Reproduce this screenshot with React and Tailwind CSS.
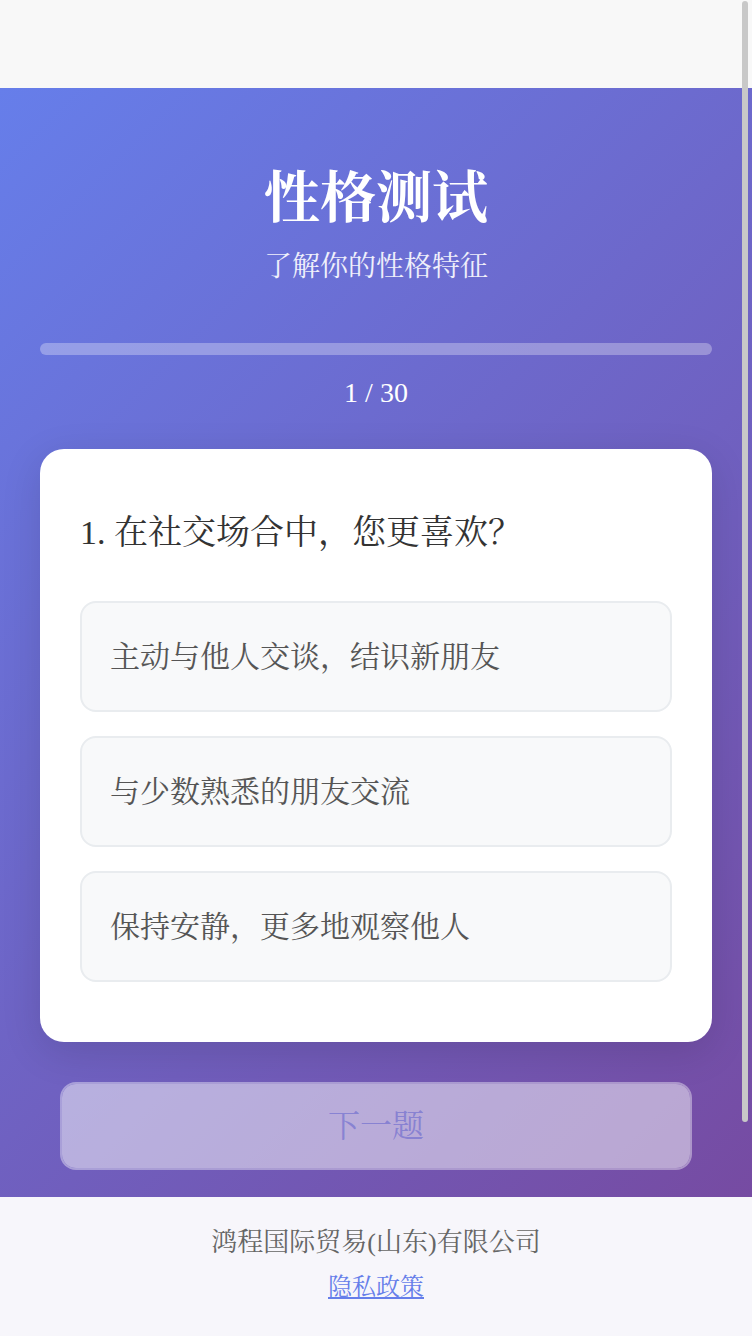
export default function App() {
  const options = [
    "主动与他人交谈，结识新朋友",
    "与少数熟悉的朋友交流",
    "保持安静，更多地观察他人",
  ];
  return (
    <div className="min-h-[1591px] bg-[#f7f6fb] font-['Liberation_Serif','Noto_Serif_CJK_SC',serif]">
      <div className="h-[88px] bg-[#f8f8f8]" />
      <section className="bg-[linear-gradient(135deg,#667eea_0%,#764ba2_100%)] px-10 pt-[76px] pb-[27px]">
        <h1 className="text-center text-[56px] leading-[68px] font-bold text-white">
          性格测试
        </h1>
        <p className="mt-[15px] text-center text-[28px] leading-[40px] text-white/90">
          了解你的性格特征
        </p>
        <div className="mt-[56px] h-3 w-full rounded-full bg-white/30">
          <div className="h-3 w-0 rounded-full bg-white" />
        </div>
        <div className="mt-[18px] text-center text-[28px] leading-[40px] text-white">
          1 / 30
        </div>
        <div className="mt-[36px] rounded-[24px] bg-white px-10 pt-[58px] pb-[60px] shadow-[0_10px_40px_rgba(0,0,0,0.12)]">
          <h2 className="text-[34px] leading-[52px] text-[#333]">
            1. 在社交场合中，您更喜欢？
          </h2>
          <div className="mt-[42px] flex flex-col gap-6">
            {options.map((o) => (
              <div
                key={o}
                className="flex h-[111px] items-center rounded-[16px] border-2 border-[#e9ecef] bg-[#f8f9fa] px-[28px] text-[30px] leading-[40px] text-[#555]"
              >
                {o}
              </div>
            ))}
          </div>
        </div>
        <div className="mx-5 mt-10">
          <button
            disabled
            className="flex h-[88px] w-full items-center justify-center rounded-[16px] border-2 border-white/80 bg-white bg-clip-padding text-[32px] leading-[40px] text-[#667eea]/65 opacity-50"
          >
            下一题
          </button>
        </div>
      </section>
      <footer className="bg-[#f7f6fb] pt-[26px] text-center">
        <p className="text-[26px] leading-[40px] text-[#666]">鸿程国际贸易(山东)有限公司</p>
        <a href="#" className="mt-[6px] inline-block text-[24px] leading-[36px] text-[#667eea] underline">
          隐私政策
        </a>
      </footer>
      <div className="fixed top-[1px] right-[4px] h-[1121px] w-[6px] rounded-full bg-[#c8c8c8]" />
    </div>
  );
}
